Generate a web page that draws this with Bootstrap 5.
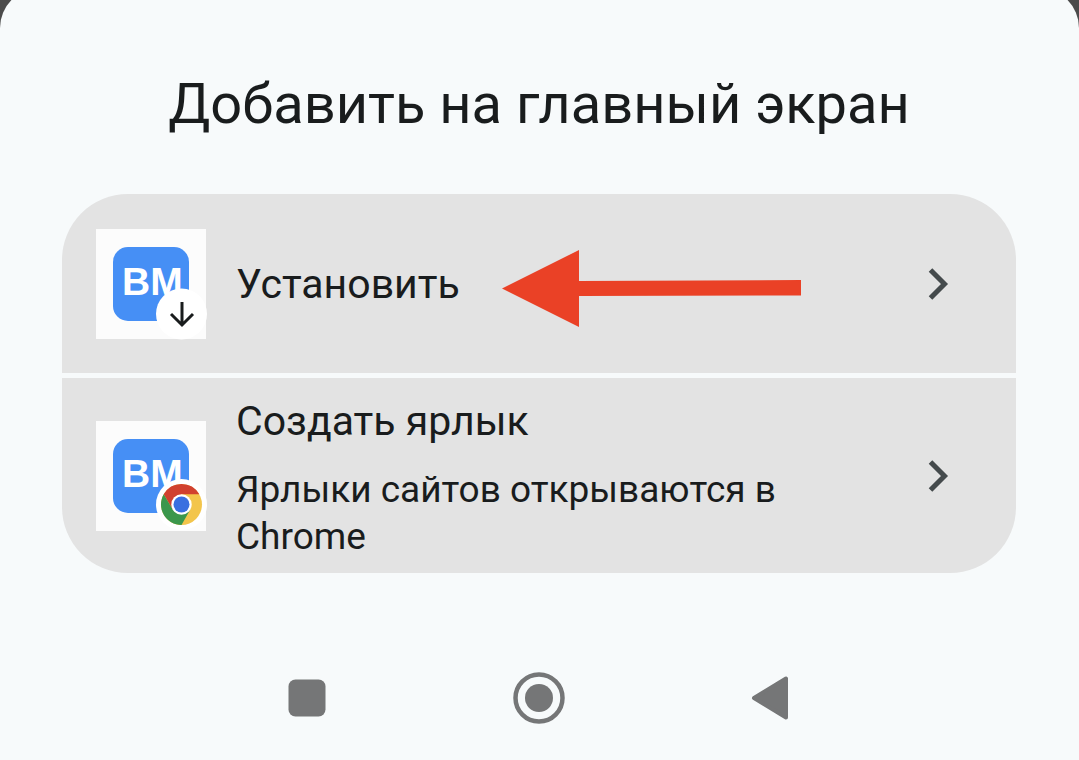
<!DOCTYPE html>
<html lang="ru">
<head>
<meta charset="utf-8">
<meta name="viewport" content="width=device-width, initial-scale=1">
<title>Добавить на главный экран</title>
<link href="https://cdn.jsdelivr.net/npm/bootstrap@5.3.0/dist/css/bootstrap.min.css" rel="stylesheet">
<style>
body { background: #4b4b4b; color: #191c1d; font-family: Roboto, "Liberation Sans", sans-serif; }
.sheet { background: #f7fafb; border-radius: 40px 40px 0 0; margin-top: -12px; padding: 80px 63px 0 62px; }
.sheet-title { font-size: 56px; line-height: 72px; font-weight: 400; margin-bottom: 54px; }
.options { gap: 5px; border-radius: 66px; overflow: hidden; }
.option { background: #e3e3e3; color: inherit; border: 0; border-radius: 0; padding: 12px 60px 12px 34px; gap: 30px; min-height: 179px; }
.option-tall { min-height: 195px; }
.option-label { font-size: 41px; line-height: 58px; }
.option-note { font-size: 37px; line-height: 47px; margin-top: 16px; max-width: 580px; }
.pointer { left: 440px; top: 56px; }
.sysnav { width: 73%; padding: 40px 0 36px; }
.sysnav button { color: #757677; }
</style>
</head>
<body class="min-vh-100 d-flex flex-column">
<main class="sheet flex-grow-1 d-flex flex-column">
  <h1 class="sheet-title text-center">Добавить на главный экран</h1>

  <div class="options d-flex flex-column">
    <button type="button" class="option btn d-flex align-items-center text-start position-relative w-100">
      <svg class="flex-shrink-0 overflow-visible" width="110" height="110" viewBox="0 0 110 110" aria-hidden="true">
        <rect width="110" height="110" fill="#fcfcfc"/>
        <rect x="17" y="18" width="76" height="74" rx="15" fill="#468ff5"/>
        <text x="26" y="66" font-family="Liberation Sans, Arial, sans-serif" font-weight="700" font-size="39" fill="#fff">BM</text>
        <circle cx="85.500" cy="85" r="25.500" fill="#fff"/>
        <path d="M86 73v23M75 85l11 11 11-11" fill="none" stroke="#191c1d" stroke-width="3"/>
      </svg>
      <span class="option-label flex-grow-1">Установить</span>
      <svg class="pointer position-absolute" width="299" height="77" viewBox="0 0 299 77" aria-hidden="true">
        <path d="M0 38.500L77 0v31l222-1v15.500L77 46v31z" fill="#ea4126"/>
      </svg>
      <svg class="flex-shrink-0" width="36" height="36" viewBox="0 0 36 36" aria-hidden="true">
        <path d="M10.500 4l14 14-14 14" fill="none" stroke="#444a4c" stroke-width="5"/>
      </svg>
    </button>

    <button type="button" class="option option-tall btn d-flex align-items-center text-start w-100">
      <svg class="flex-shrink-0 overflow-visible" width="110" height="110" viewBox="0 0 110 110" aria-hidden="true">
        <rect width="110" height="110" fill="#fcfcfc"/>
        <rect x="17" y="18" width="76" height="74" rx="15" fill="#468ff5"/>
        <text x="26" y="66" font-family="Liberation Sans, Arial, sans-serif" font-weight="700" font-size="39" fill="#fff">BM</text>
        <circle cx="85.500" cy="83.500" r="25.500" fill="#fff"/>
        <g transform="translate(85.500 83.500)">
          <circle r="20.500" fill="#f3c54b"/>
          <path d="M0-10.200H17.800A20.500 20.500 0 0 0-17.800-10.200L-8.800 5.100z" fill="#d1412f"/>
          <path d="M-17.800-10.200A20.500 20.500 0 0 0 0 20.500L8.800 5.100-8.800 5.100z" fill="#3b974c"/>
          <circle r="10.200" fill="#fff"/>
          <circle r="8" fill="#3a6fe0"/>
        </g>
      </svg>
      <span class="flex-grow-1">
        <span class="option-label d-block">Создать ярлык</span>
        <span class="option-note d-block">Ярлыки сайтов открываются в Chrome</span>
      </span>
      <svg class="flex-shrink-0" width="36" height="36" viewBox="0 0 36 36" aria-hidden="true">
        <path d="M10.500 4l14 14-14 14" fill="none" stroke="#444a4c" stroke-width="5"/>
      </svg>
    </button>
  </div>

  <nav class="sysnav row g-0 mt-auto mx-auto text-center" aria-label="Системная навигация">
    <div class="col"><button type="button" class="btn border-0 p-0" aria-label="Недавние">
      <svg class="d-block" width="52" height="52" viewBox="0 0 52 52"><rect x="7.500" y="7.500" width="37" height="37" rx="7" fill="currentColor"/></svg>
    </button></div>
    <div class="col"><button type="button" class="btn border-0 p-0" aria-label="Домой">
      <svg class="d-block" width="52" height="52" viewBox="0 0 52 52"><circle cx="26" cy="26" r="23.500" fill="none" stroke="currentColor" stroke-width="4.500"/><circle cx="26" cy="26" r="14" fill="currentColor"/></svg>
    </button></div>
    <div class="col"><button type="button" class="btn border-0 p-0" aria-label="Назад">
      <svg class="d-block" width="52" height="52" viewBox="0 0 52 52"><path d="M9 26L41 6.500V45.500z" fill="currentColor" stroke="currentColor" stroke-width="4" stroke-linejoin="round"/></svg>
    </button></div>
  </nav>
</main>
<script src="https://cdn.jsdelivr.net/npm/bootstrap@5.3.0/dist/js/bootstrap.bundle.min.js"></script>
</body>
</html>
